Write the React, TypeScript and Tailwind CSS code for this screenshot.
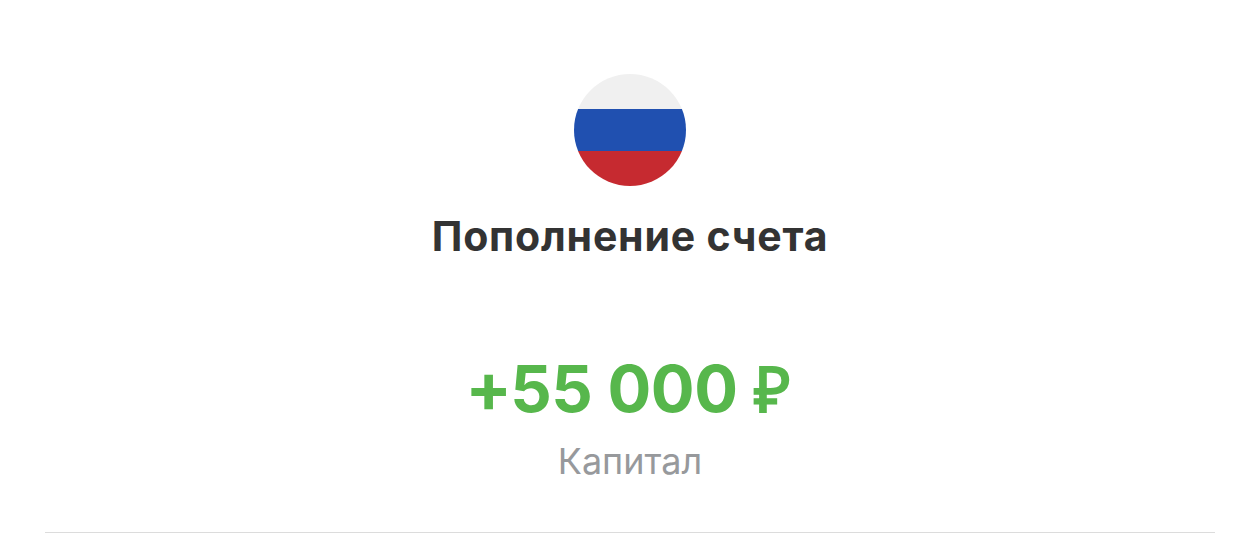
type TOperation = {
    title: string
    sign: string
    amount: string
    currency: string
    account: string
}

const operation: TOperation = {
    title: 'Пополнение счета',
    sign: '+',
    amount: '55 000',
    currency: '₽',
    account: 'Капитал',
}

const RussiaFlag = () => (
    <div className="flex size-28 flex-col overflow-hidden rounded-full">
        <div className="h-[35px] bg-[#f0f0f0]"/>
        <div className="h-[42px] bg-[#2050b0]"/>
        <div className="flex-1 bg-[#c62a30]"/>
    </div>
)

const App = () => {
    return (
        <main className="flex h-[543px] flex-col items-center bg-white px-[45px] pt-[74px] font-['Inter','Liberation_Sans',sans-serif] antialiased">
            <RussiaFlag/>

            {/* Title */}
            <h1 className="mt-[25px] text-[41px] leading-[50px] font-bold tracking-[0.8px] whitespace-nowrap text-[#333333]">
                {operation.title}
            </h1>

            {/* Amount */}
            <p className="mt-[86px] mr-1 flex items-baseline text-[65px] leading-[80px] font-bold whitespace-nowrap text-[#57b74c]">
                <span className="text-[69px]">{operation.sign}</span>
                <span className="-ml-0.5 tracking-[-0.4px]">{operation.amount}</span>
                <span className="ml-4 font-['Liberation_Sans',sans-serif] text-[63px]">{operation.currency}</span>
            </p>

            {/* Account */}
            <p className="mt-[9px] text-4xl leading-[44px] whitespace-nowrap text-[#97999c]">
                {operation.account}
            </p>

            <hr className="mt-auto mb-2.5 w-full border-[#dcdcdc]"/>
        </main>
    )
}

export default App
